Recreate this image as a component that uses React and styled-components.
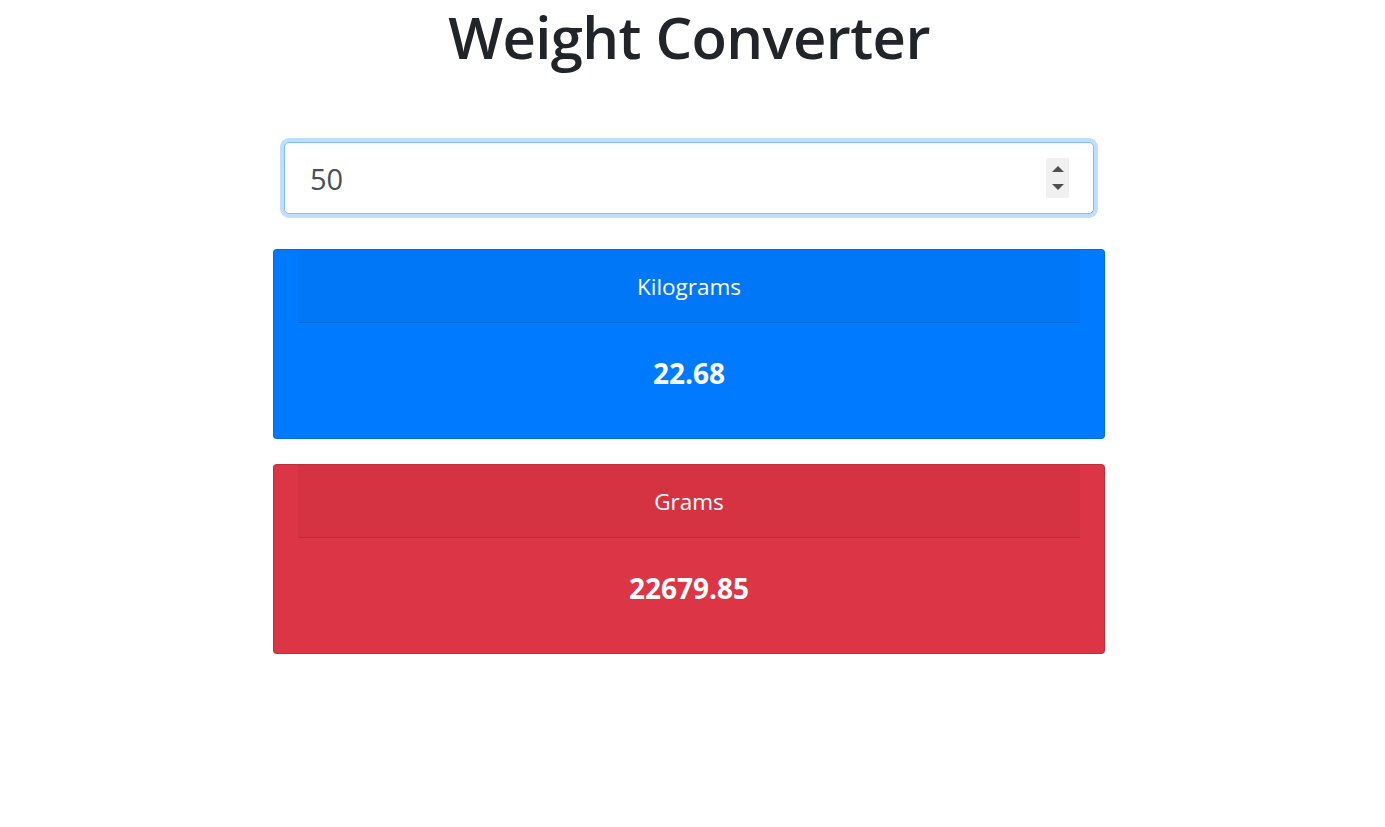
import React, { useState } from "react"
import styled, { createGlobalStyle } from "styled-components"

const GlobalStyle = createGlobalStyle`
  body {
    margin: 0;
    background: #ffffff;
    font-family: "Open Sans", "Noto Sans", sans-serif;
    color: #212529;
  }
`

const App = () => {
  const [pounds] = useState(50)
  const kilograms = (pounds / 2.2046).toFixed(2)
  const grams = (pounds / 0.0022046).toFixed(2)

  return (
    <Page>
      <GlobalStyle />
      <Title>Weight Converter</Title>
      <Container>
        <Form>
          <InputBox>
            <NumberInput type="text" value={pounds} readOnly />
            <Spinner>
              <Arrow up />
              <Arrow />
            </Spinner>
          </InputBox>
        </Form>
        <Cards>
          <Card color="#007bff">
            <CardHeader>Kilograms</CardHeader>
            <CardBody>
              <Value>{kilograms}</Value>
            </CardBody>
          </Card>
          <Card color="#dc3545">
            <CardHeader>Grams</CardHeader>
            <CardBody>
              <Value>{grams}</Value>
            </CardBody>
          </Card>
        </Cards>
      </Container>
    </Page>
  )
}

export default App

const Page = styled.div`
  display: flex;
  flex-direction: column;
  align-items: center;
  padding-right: 7px;
`

const Title = styled.h1`
  margin: 0;
  padding-top: 0;
  font-size: 58px;
  font-weight: 600;
  letter-spacing: -0.6px;
  line-height: 74px;
  color: #212529;
`

const Container = styled.div`
  width: 832px;
  margin-top: 68px;
`

const Form = styled.div`
  padding: 0 11px;
`

const InputBox = styled.div`
  display: flex;
  align-items: center;
  height: 72px;
  box-sizing: border-box;
  border: 1px solid #80bdff;
  border-radius: 5px;
  box-shadow: 0 0 0 4px rgba(0, 123, 255, 0.25);
  background: #ffffff;
  padding: 0 24px 0 25px;
`

const NumberInput = styled.input`
  flex: 1;
  min-width: 0;
  border: none;
  outline: none;
  background: transparent;
  padding: 0;
  font-family: "Open Sans", "Noto Sans", sans-serif;
  font-size: 29px;
  color: #495057;
`

const Spinner = styled.div`
  width: 23px;
  height: 40px;
  background: #f0f0f0;
  display: flex;
  flex-direction: column;
  align-items: center;
  justify-content: center;
  gap: 12px;
`

const Arrow = styled.span`
  width: 0;
  height: 0;
  border-left: 6px solid transparent;
  border-right: 6px solid transparent;
  ${({ up }) =>
    up ? "border-bottom: 6px solid #4f4f4f;" : "border-top: 6px solid #4f4f4f;"}
`

const Cards = styled.div`
  margin-top: 35px;
  display: flex;
  flex-direction: column;
  gap: 25px;
`

const Card = styled.div`
  background: ${({ color }) => color};
  border: 1px solid rgba(0, 0, 0, 0.125);
  border-radius: 4px;
  color: #ffffff;
`

const CardHeader = styled.div`
  margin: 0 24px;
  height: 72px;
  display: flex;
  align-items: center;
  justify-content: center;
  background: rgba(0, 0, 0, 0.03);
  border-bottom: 1px solid rgba(0, 0, 0, 0.125);
  font-size: 22.5px;
`

const CardBody = styled.div`
  height: 115px;
  padding-top: 32px;
  box-sizing: border-box;
  text-align: center;
`

const Value = styled.h4`
  margin: 0;
  font-size: 28px;
  font-weight: 700;
  line-height: 36px;
`
